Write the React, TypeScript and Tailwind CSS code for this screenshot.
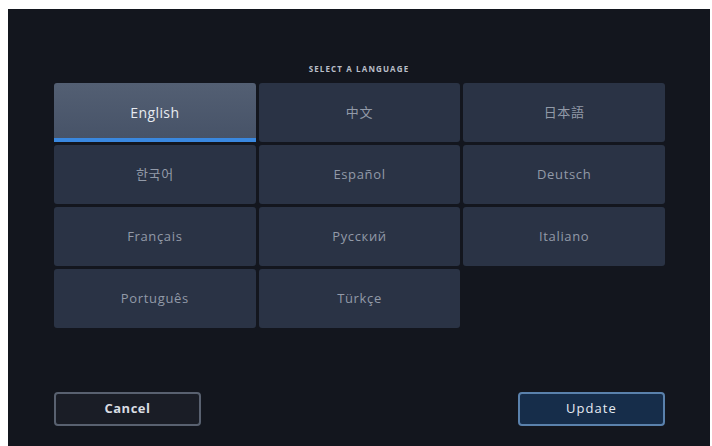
import React, { useState } from "react";

const languages = [
  "English",
  "中文",
  "日本語",
  "한국어",
  "Español",
  "Deutsch",
  "Français",
  "Русский",
  "Italiano",
  "Português",
  "Türkçe",
];

export default function App() {
  const [selected, setSelected] = useState("English");

  return (
    <div
      className="w-[712px] h-[446px] bg-white overflow-hidden"
      style={{ fontFamily: '"Open Sans", "Noto Sans CJK SC", "Noto Sans CJK KR", sans-serif' }}
    >
      <div className="ml-[8px] mt-[9px] w-[702px] h-[437px] bg-[#13161e] flex flex-col pt-[53px] px-[46px]">
        <div className="h-[14px] flex items-center justify-center text-[8px] font-bold tracking-[0.14em] text-[#b9bec8]">
          SELECT A LANGUAGE
        </div>

        <div className="mt-[7px] w-[611px] grid grid-cols-3 gap-[3px]">
          {languages.map((lang) => {
            const active = lang === selected;
            return (
              <button
                key={lang}
                onClick={() => setSelected(lang)}
                className={
                  active
                    ? "relative h-[59px] rounded-t-[3px] bg-gradient-to-b from-[#535f73] to-[#465267] text-[14px] font-medium tracking-[0.03em] text-[#e8ebf0]"
                    : "h-[59px] rounded-[3px] bg-[#2a3345] text-[13px] tracking-[0.05em] text-[#929aa8]"
                }
              >
                {lang}
                {active && (
                  <span className="absolute left-0 right-0 bottom-0 h-[4px] bg-[#3a88df]" />
                )}
              </button>
            );
          })}
        </div>

        <div className="mt-[64px] w-[611px] flex justify-between">
          <button className="w-[147px] h-[34px] rounded-[4px] border-2 border-[#596170] bg-[#1a1d26] text-[13px] font-bold tracking-[0.04em] text-[#d9dce2]">
            Cancel
          </button>
          <button className="w-[147px] h-[34px] rounded-[4px] border-2 border-[#5a81ac] bg-[#162d4a] text-[13px] font-medium tracking-[0.08em] text-[#e6ebf2]">
            Update
          </button>
        </div>
      </div>
    </div>
  );
}
